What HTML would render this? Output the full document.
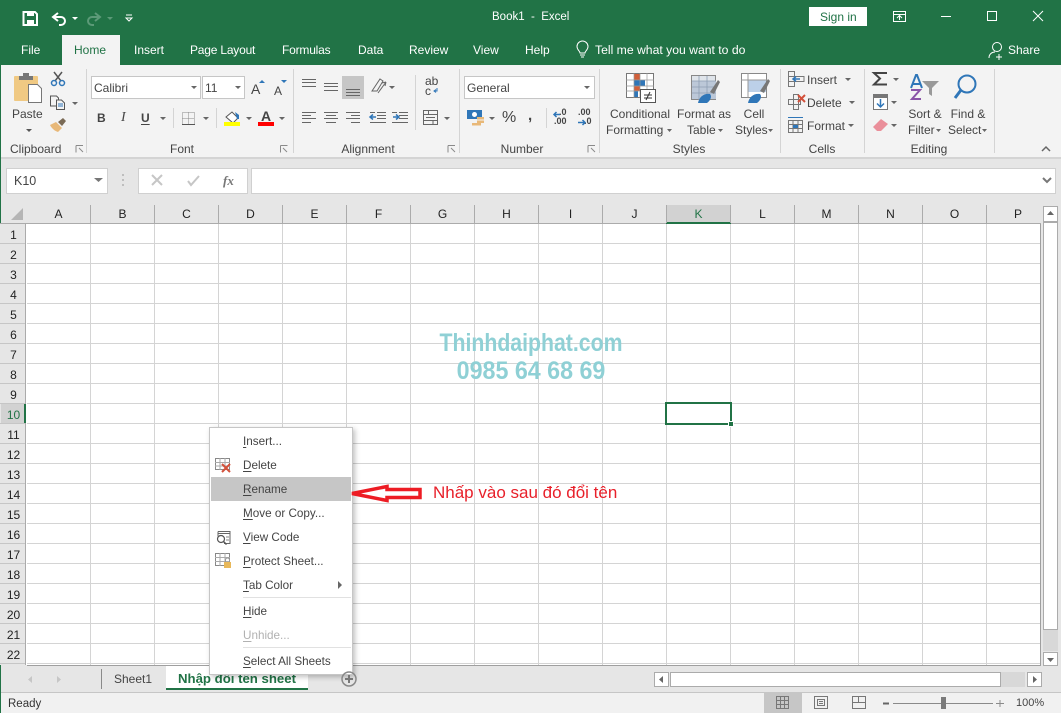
<!DOCTYPE html>
<html><head><meta charset="utf-8"><title>Book1 - Excel</title>
<style>
html,body{margin:0;padding:0}
body{width:1061px;height:713px;position:relative;overflow:hidden;background:#e6e6e6;font-family:"Liberation Sans",sans-serif;font-size:12px;color:#444}
div{box-sizing:border-box}
.a{position:absolute}
.t{position:absolute;white-space:nowrap;line-height:16px}
.w{color:#fff}
.c{transform:translateX(-50%)}
.u{text-decoration:underline;text-underline-offset:2px}
.ch{position:absolute;top:205px;height:18px;width:64px;text-align:center;line-height:18px;color:#222;border-right:1px solid #ababab}
.rh{position:absolute;left:1px;width:25px;height:20px;text-align:center;line-height:20px;color:#222}
.m{position:absolute;left:243px;white-space:nowrap;line-height:16px;color:#444;font-size:11.7px}
.m span{text-decoration:underline;text-underline-offset:2px}
</style></head><body>
<div class="a" style="left:0;top:0;width:1061px;height:65px;background:#217346"></div>
<div class="a" style="left:0;top:65px;width:1061px;height:94px;background:#f3f3f3;border-bottom:2px solid #d4d4d4"></div>
<div class="a" style="left:0;top:65px;width:1px;height:648px;background:#217346"></div>
<div class="a" style="left:62px;top:35px;width:58px;height:30px;background:#f3f3f3"></div>
<div class="t w" style="left:492px;top:9px;font-size:11.5px">Book1&nbsp; -&nbsp; Excel</div>
<div class="a" style="left:809px;top:7px;width:58px;height:19px;background:#fff"></div>
<div class="t" style="left:820px;top:9px;color:#217346">Sign in</div>
<div class="t w" style="left:21px;top:42px">File</div>
<div class="t" style="left:74px;top:42px;color:#217346">Home</div>
<div class="t w" style="left:134px;top:42px">Insert</div>
<div class="t w" style="left:190px;top:42px;letter-spacing:-.2px">Page Layout</div>
<div class="t w" style="left:282px;top:42px;letter-spacing:-.2px">Formulas</div>
<div class="t w" style="left:358px;top:42px">Data</div>
<div class="t w" style="left:409px;top:42px">Review</div>
<div class="t w" style="left:473px;top:42px">View</div>
<div class="t w" style="left:525px;top:42px">Help</div>
<div class="t w" style="left:595px;top:42px;font-size:12.2px">Tell me what you want to do</div>
<div class="t w" style="left:1008px;top:42px">Share</div>

<div class="t" style="left:12px;top:106px">Paste</div>
<div class="t" style="left:10px;top:141px">Clipboard</div>
<div class="t c" style="left:182px;top:141px">Font</div>
<div class="t c" style="left:368px;top:141px">Alignment</div>
<div class="t c" style="left:522px;top:141px">Number</div>
<div class="t c" style="left:689px;top:141px">Styles</div>
<div class="t c" style="left:822px;top:141px">Cells</div>
<div class="t c" style="left:929px;top:141px">Editing</div>

<div class="a" style="left:91px;top:76px;width:110px;height:23px;background:#fff;border:1px solid #c6c6c6"></div>
<div class="a" style="left:202px;top:76px;width:43px;height:23px;background:#fff;border:1px solid #c6c6c6"></div>
<div class="t" style="left:94px;top:80px">Calibri</div>
<div class="t" style="left:205px;top:80px">11</div>
<div class="a" style="left:464px;top:76px;width:131px;height:23px;background:#fff;border:1px solid #c6c6c6"></div>
<div class="t" style="left:467px;top:80px">General</div>
<div class="a" style="left:342px;top:76px;width:22px;height:23px;background:#c6c6c6"></div>
<div class="t" style="left:425px;top:76px;font-size:12px;line-height:10px;width:14px">ab<br>c</div>
<div class="t" style="left:502px;top:110px;font-size:16px">%</div>
<div class="t" style="left:528px;top:108px;font-size:15px;font-weight:bold">,</div>
<div class="t" style="left:559px;top:108px;font-size:9px;line-height:9px;font-weight:bold">.0<br></div>
<div class="t" style="left:554px;top:117px;font-size:9px;line-height:9px;font-weight:bold">.00</div>
<div class="t" style="left:578px;top:108px;font-size:9px;line-height:9px;font-weight:bold">.00</div>
<div class="t" style="left:584px;top:117px;font-size:9px;line-height:9px;font-weight:bold">.0</div>
<div class="t" style="left:97px;top:110px;font-weight:bold">B</div>
<div class="t" style="left:121px;top:110px;font-style:italic;font-family:'Liberation Serif',serif;font-size:14px">I</div>
<div class="t u" style="left:141px;top:110px;font-weight:bold">U</div>
<div class="t" style="left:251px;top:81px;font-size:14px">A</div>
<div class="t" style="left:274px;top:83px;font-size:12px">A</div>
<div class="t" style="left:261px;top:108px;font-size:14px;font-weight:bold">A</div>

<div class="t c" style="left:640px;top:106px">Conditional</div>
<div class="t" style="left:606px;top:122px">Formatting</div>
<div class="t c" style="left:704px;top:106px">Format as</div>
<div class="t" style="left:687px;top:122px">Table</div>
<div class="t c" style="left:754px;top:106px">Cell</div>
<div class="t" style="left:735px;top:122px">Styles</div>
<div class="t" style="left:807px;top:72px">Insert</div>
<div class="t" style="left:807px;top:95px">Delete</div>
<div class="t" style="left:807px;top:118px">Format</div>
<div class="t c" style="left:925px;top:106px">Sort &amp;</div>
<div class="t" style="left:908px;top:122px">Filter</div>
<div class="t c" style="left:968px;top:106px">Find &amp;</div>
<div class="t" style="left:948px;top:122px">Select</div>

<div class="a" style="left:6px;top:168px;width:102px;height:26px;background:#fff;border:1px solid #d0d0d0"></div>
<div class="t" style="left:14px;top:173px;font-size:12.5px">K10</div>
<div class="a" style="left:138px;top:168px;width:110px;height:26px;background:#fff;border:1px solid #d0d0d0"></div>
<div class="a" style="left:251px;top:168px;width:805px;height:26px;background:#fff;border:1px solid #d0d0d0"></div>
<div class="t" style="left:223px;top:173px;font-family:'Liberation Serif',serif;font-style:italic;font-weight:bold;color:#777;font-size:13px">fx</div>

<div class="a" style="left:27px;top:224px;width:1014px;height:442px;background-color:#fff;background-image:linear-gradient(to right,transparent 63px,#d4d4d4 63px),linear-gradient(to bottom,transparent 19px,#d4d4d4 19px);background-size:64px 100%,100% 20px;border-right:1px solid #9f9f9f;border-bottom:1px solid #9f9f9f"></div>
<div class="a" style="left:26px;top:224px;width:1px;height:441px;background:#fff"></div>
<div class="a" style="left:0;top:224px;width:26px;height:441px;border-right:1px solid #ababab;background:repeating-linear-gradient(to bottom,#e6e6e6 0,#e6e6e6 19px,#c6c6c6 19px,#c6c6c6 20px)"></div>
<div class="a" style="left:0;top:223px;width:1041px;height:1px;background:#ababab"></div>
<div class="a" style="left:666px;top:205px;width:65px;height:19px;background:#d2d2d2;border-bottom:2px solid #217346"></div>
<div class="a" style="left:1px;top:404px;width:25px;height:19px;background:#d2d2d2;border-right:2px solid #217346"></div>
<div class="ch" style="left:27px">A</div><div class="ch" style="left:91px">B</div><div class="ch" style="left:155px">C</div><div class="ch" style="left:219px">D</div><div class="ch" style="left:283px">E</div><div class="ch" style="left:347px">F</div><div class="ch" style="left:411px">G</div><div class="ch" style="left:475px">H</div><div class="ch" style="left:539px">I</div><div class="ch" style="left:603px">J</div><div class="ch" style="left:667px;color:#217346;border-right:1px solid #ababab">K</div><div class="ch" style="left:731px">L</div><div class="ch" style="left:795px">M</div><div class="ch" style="left:859px">N</div><div class="ch" style="left:923px">O</div><div class="ch" style="left:986px;border:0">P</div>
<div class="rh" style="top:225px">1</div><div class="rh" style="top:245px">2</div><div class="rh" style="top:265px">3</div><div class="rh" style="top:285px">4</div><div class="rh" style="top:305px">5</div><div class="rh" style="top:325px">6</div><div class="rh" style="top:345px">7</div><div class="rh" style="top:365px">8</div><div class="rh" style="top:385px">9</div><div class="rh" style="top:405px;color:#217346">10</div><div class="rh" style="top:425px">11</div><div class="rh" style="top:445px">12</div><div class="rh" style="top:465px">13</div><div class="rh" style="top:485px">14</div><div class="rh" style="top:505px">15</div><div class="rh" style="top:525px">16</div><div class="rh" style="top:545px">17</div><div class="rh" style="top:565px">18</div><div class="rh" style="top:585px">19</div><div class="rh" style="top:605px">20</div><div class="rh" style="top:625px">21</div><div class="rh" style="top:645px">22</div>

<div class="a" style="left:665px;top:402px;width:67px;height:23px;border:2px solid #217346"></div>
<div class="a" style="left:728px;top:421px;width:6px;height:6px;background:#217346;border:1px solid #fff"></div>

<div class="t c" style="left:530.500px;top:328px;font-size:25px;line-height:30px;font-weight:bold;color:#8fd0d5;transform:translateX(-50%) scaleX(.85)">Thinhdaiphat.com</div>
<div class="t c" style="left:530.500px;top:356px;font-size:25px;line-height:30px;font-weight:bold;color:#8fd0d5;transform:translateX(-50%) scaleX(.93)">0985 64 68 69</div>

<div class="a" style="left:1043px;top:206px;width:15px;height:16px;background:#fff;border:1px solid #ababab"></div>
<div class="a" style="left:1043px;top:222px;width:15px;height:408px;background:#fff;border:1px solid #ababab"></div>
<div class="a" style="left:1043px;top:630px;width:15px;height:21px;background:#d8d8d8"></div>
<div class="a" style="left:1043px;top:652px;width:15px;height:14px;background:#fff;border:1px solid #ababab"></div>

<div class="a" style="left:1px;top:692px;width:1060px;height:21px;background:#f1f1f1;border-top:1px solid #c6c6c6"></div>
<div class="a" style="left:101px;top:669px;width:1px;height:20px;background:#8a8a8a"></div>
<div class="t" style="left:114px;top:671px">Sheet1</div>
<div class="a" style="left:166px;top:666px;width:142px;height:24px;background:#fff;border-bottom:2px solid #217346"></div>
<div class="t" style="left:178px;top:671px;color:#217346;font-weight:bold;font-size:13.2px">Nhập đổi tên sheet</div>
<div class="a" style="left:654px;top:672px;width:15px;height:15px;background:#fff;border:1px solid #ababab"></div>
<div class="a" style="left:670px;top:672px;width:331px;height:15px;background:#fff;border:1px solid #ababab"></div>
<div class="a" style="left:1001px;top:672px;width:24px;height:15px;background:#d8d8d8"></div>
<div class="a" style="left:1027px;top:672px;width:15px;height:15px;background:#fff;border:1px solid #ababab"></div>
<div class="t" style="left:8px;top:696px;color:#333;font-size:11.5px">Ready</div>
<div class="a" style="left:764px;top:693px;width:38px;height:20px;background:#c6c6c6"></div>
<div class="t" style="left:1016px;top:695px;color:#444;font-size:11px">100%</div>

<div class="a" style="left:209px;top:427px;width:144px;height:248px;background:#fff;border:1px solid #c6c6c6;box-shadow:2px 2px 5px rgba(0,0,0,.25)"></div>
<div class="a" style="left:211px;top:477px;width:140px;height:24px;background:#c6c6c6"></div>
<div class="a" style="left:243px;top:597px;width:108px;height:1px;background:#e1e1e1"></div>
<div class="a" style="left:243px;top:647px;width:108px;height:1px;background:#e1e1e1"></div>
<div class="m" style="top:434px"><span>I</span>nsert...</div>
<div class="m" style="top:458px"><span>D</span>elete</div>
<div class="m" style="top:482px"><span>R</span>ename</div>
<div class="m" style="top:506px"><span>M</span>ove or Copy...</div>
<div class="m" style="top:530px"><span>V</span>iew Code</div>
<div class="m" style="top:554px"><span>P</span>rotect Sheet...</div>
<div class="m" style="top:578px"><span>T</span>ab Color</div>
<div class="m" style="top:604px"><span>H</span>ide</div>
<div class="m" style="top:628px;color:#b1b1b1"><span>U</span>nhide...</div>
<div class="m" style="top:654px"><span>S</span>elect All Sheets</div>
<div class="t" style="left:433px;top:484px;font-size:17px;line-height:18px;color:#e8202a">Nhấp vào sau đó đổi tên</div>

<svg class="a" style="left:0;top:0" width="1061" height="713" viewBox="0 0 1061 713" fill="none">
<!-- QAT -->
<path d="M24 12h11l2 2v11H23.500V12z" stroke="#fff" stroke-width="2"/><rect x="27" y="12" width="7" height="4" fill="#fff"/><rect x="27" y="20" width="7" height="5" fill="#fff"/>
<path d="M58 13l-5 4 5 4M53 17h8a4 4 0 0 1 0 8h-2" stroke="#fff" stroke-width="2"/><path d="M72 17h6l-3 3z" fill="#fff"/>
<path d="M95 13l5 4-5 4M100 17h-8a4 4 0 0 0 0 8h2" stroke="#5c9a78" stroke-width="2"/><path d="M107 17h6l-3 3z" fill="#5c9a78"/>
<path d="M126 15h6M126 18h6l-3 3z" stroke="#fff"/>
<!-- window -->
<path d="M893.500 11.500h12v10h-12zM893.500 14.500h12M899.500 20v-4M897 18l2.500-2.500 2.500 2.500" stroke="#fff"/>
<path d="M941 16.500h10" stroke="#fff"/><rect x="987.500" y="11.500" width="9" height="9" stroke="#fff"/><path d="M1033 11l10 10M1043 11l-10 10" stroke="#fff"/>
<circle cx="997" cy="47" r="4.500" stroke="#fff"/><path d="M989 58c0-4 3-6 6-6M999 54v6M996 57h6" stroke="#fff"/>
<path d="M580 55h5M580 53c0-2-3-3-3-6.500a5.500 5.500 0 0 1 11 0c0 3.500-3 4.500-3 6.500zM581 57h3" stroke="#fff"/>
<!-- separators -->
<path d="M86.500 69v84M293.500 69v84M459.500 69v84M599.500 69v84M780.500 69v84M864.500 69v84M994.500 69v84" stroke="#d4d4d4"/>
<path d="M173.500 108v20M216.500 108v20M415.500 75v55M546.500 108v20" stroke="#d4d4d4"/>
<!-- launchers -->
<g stroke="#8a8a8a"><path d="M76 145.500h7M76 145.500v7M79 148l4 4M280.500 145.500h7M280.500 145.500v7M283 148l4 4"/><path d="M448 145.500h7M448 145.500v7M451 148l4 4M588 145.500h7M588 145.500v7M591 148l4 4"/></g>
<!-- clipboard -->
<rect x="14" y="76" width="24" height="25" rx="1" fill="#f0c983"/><rect x="19" y="76" width="14" height="4" fill="#777"/><rect x="23" y="73" width="6" height="4" fill="#777"/>
<path d="M28.500 84.500h9l4 4v14h-13z" fill="#fff" stroke="#777"/>
<path d="M26 129h6l-3 3z" fill="#555"/>
<!-- cut copy painter -->
<path d="M54 72l7 9M62 72l-7 9" stroke="#555" stroke-width="1.500"/><circle cx="54" cy="83" r="2.500" stroke="#2f76b8" stroke-width="1.500"/><circle cx="62" cy="83" r="2.500" stroke="#2f76b8" stroke-width="1.500"/>
<path d="M50.500 96h6l2 2v8h-8z" fill="#f3f3f3" stroke="#555"/><path d="M56.500 100h5l3 3v6.500h-8z" fill="#f3f3f3" stroke="#555"/><path d="M58 104h5M58 106h5" stroke="#2f76b8"/><path d="M72 102h6l-3 3z" fill="#666"/>
<path d="M50 125l6-3 6 6-4 4c-3-1-6-3-8-7z" fill="#e8b878"/><path d="M58 122l5-4 3 3-4 5z" fill="#7a6a55"/>
<!-- font dropdowns -->
<path d="M191 86h6l-3 3zM235 86h6l-3 3zM584 86h6l-3 3zM160 117h6l-3 3zM203 117h6l-3 3zM246 117h6l-3 3zM279 117h6l-3 3zM489 117h6l-3 3zM444 117h6l-3 3zM389 86h6l-3 3z" fill="#666"/>
<path d="M259 83l3-3 3 3z" fill="#2f76b8"/><path d="M281 80h6l-3 3z" fill="#2f76b8"/>
<!-- border -->
<path d="M182.500 112.500h12v12h-12zM182.500 118.500h12M188.500 112.500v12" stroke="#888" stroke-dasharray="1 1"/><path d="M182 124.500h13" stroke="#555"/>
<!-- fill -->
<path d="M226 117l6-5 6 6-5 5z" stroke="#555" fill="#fff"/><path d="M235 112l4 3v4h-2z" fill="#2f76b8"/><rect x="224" y="122" width="16" height="4" fill="#ffff00"/>
<rect x="258" y="122" width="16" height="4" fill="#ff0000"/>
<!-- align -->
<g stroke="#666"><path d="M302 79.500h14M302 82.500h14M302 86.500h14M324 83.500h14M324 86.500h14M324 90.500h14M346 89.500h14M346 92.500h14M346 95.500h14"/>
<path d="M302 112.500h14M302 115.500h9M302 118.500h14M302 122.500h9M324 112.500h14M326 115.500h10M324 118.500h14M326 122.500h10M346 112.500h14M351 115.500h9M346 118.500h14M351 122.500h9"/>
<path d="M377 112.500h9M377 115.500h9M377 118.500h9M370 122.500h16M370 112.500h5M392 122.500h16M392 112.500h5M399 112.500h9M399 115.500h9M399 118.500h9"/></g>
<path d="M376 117h-5M373 114.500l-3 2.500 3 2.500M393 117h5M396 114.500l3 2.500-3 2.500" stroke="#2f76b8" stroke-width="1.500"/>
<path d="M372 91l8-12 3 2-6 10zM378 93l8-11M386 82l-4 1M386 82l-1 4" stroke="#666"/>
<path d="M437 88v3h-3M436 89.500l-2 1.500 2 1.500" stroke="#2f76b8"/>
<rect x="423.500" y="110.500" width="14" height="14" stroke="#666"/><path d="M423 114.500h15M423 120.500h15M428.500 110v4M433 120v4M426 117.500h9" stroke="#666"/>
<!-- number -->
<rect x="467" y="110" width="15" height="9" fill="#2f76b8"/><circle cx="474.500" cy="114.500" r="2.500" fill="#fff"/><rect x="477" y="117" width="7" height="2.500" fill="#e8b878"/><rect x="477" y="120.500" width="7" height="2.500" fill="#e8b878"/><rect x="472" y="123" width="9" height="2.500" fill="#e8b878"/>
<path d="M554 114.500h6M556.500 112l-2.500 2.500 2.500 2.500M578 122.500h7M582.500 120l2.500 2.500-2.500 2.500" stroke="#2f76b8" stroke-width="1.500"/>
<!-- styles -->
<rect x="626.500" y="73.500" width="27" height="24" fill="#fff" stroke="#777"/><rect x="634" y="74" width="6" height="6" fill="#d2603a"/><rect x="634" y="80" width="11" height="6" fill="#2f76b8"/><rect x="634" y="86" width="6" height="5" fill="#d2603a"/><rect x="634" y="91" width="4" height="6" fill="#2f76b8"/>
<path d="M626 80h28M626 86h28M626 91h28M634 73v25M640 73v25M647 73v25" stroke="#999" stroke-width=".7"/>
<rect x="640.500" y="89.500" width="15" height="13" fill="#fff" stroke="#555"/><path d="M644 95h8M644 98h8M650 92l-4 8" stroke="#333"/>
<rect x="691.500" y="75.500" width="24" height="24" fill="#dfe4ea" stroke="#888"/><rect x="692" y="81" width="24" height="18" fill="#bcc8d8"/><path d="M692 81h24M692 87h24M692 93h24M699 76v24M707 76v24" stroke="#8e9fb3" stroke-width=".8"/>
<path d="M710 92l8-12 2 2-6 12z" fill="#777"/><path d="M698 103c1-6 6-10 12-9 2 2 1 6-3 9z" fill="#2f76b8"/>
<rect x="741.500" y="73.500" width="25" height="24" fill="#fff" stroke="#888"/><rect x="748" y="80" width="18" height="12" fill="#bcd0e8"/><path d="M741 80h26M748 73v25" stroke="#999"/>
<path d="M760 91l8-12 2 2-6 12z" fill="#777"/><path d="M748 103c1-6 6-10 12-9 2 2 1 6-3 9z" fill="#2f76b8"/>
<path d="M667 129h5l-2.500 3zM718 129h5l-2.500 3zM768 129h5l-2.500 3zM845 78h6l-3 3zM849 101h6l-3 3zM848 124h6l-3 3zM893 78h6l-3 3zM891 101h6l-3 3zM891 124h6l-3 3zM936 129h5l-2.500 3zM982 129h5l-2.500 3z" fill="#666"/>
<!-- cells -->
<path d="M788.500 71.500h6v15h-6zM788.500 76.500h6M788.500 81.500h6M795 76.500h9v5h-9z" stroke="#777"/><path d="M800 79h-7M796 76.500l-3 2.500 3 2.500" stroke="#2f76b8" stroke-width="1.500"/>
<path d="M788.500 99.500h12v5h-12zM793.500 94.500h5v15h-5z" stroke="#777"/><path d="M798 95l7 7M805 95l-7 7" stroke="#d2503a" stroke-width="2"/>
<rect x="788.500" y="120.500" width="14" height="12" stroke="#777"/><path d="M788 124.500h15M788 128.500h15M793 120v12M798 120v12" stroke="#777"/><rect x="793" y="125" width="5" height="3" fill="#2f76b8"/><path d="M788 117.500h15" stroke="#2f76b8"/>
<!-- editing -->
<path d="M887 73h-13l6 5.500-6 6h13" stroke="#444" stroke-width="2"/>
<rect x="873.500" y="94.500" width="14" height="15" fill="#fff" stroke="#777"/><path d="M874 95h13v3h-13z" fill="#777"/><path d="M880.500 99v8M877 103.500l3.500 3.500 3.500-3.500" stroke="#2f76b8" stroke-width="1.500"/>
<path d="M873 127l8-8 7 5-7 7h-4z" fill="#ea8f9a"/>
<path d="M911 88l5-13h1l5 13M913 84h7" stroke="#2f76b8" stroke-width="2"/><path d="M911 90h9l-8 9h9" stroke="#8a54a8" stroke-width="2"/>
<path d="M922 81h17l-7 7v8l-3-2v-6z" fill="#999"/>
<circle cx="967" cy="84" r="8.500" stroke="#2f76b8" stroke-width="2"/><path d="M961 90l-6 8" stroke="#2f76b8" stroke-width="3"/>
<path d="M1042 151l4-4 4 4" stroke="#666" stroke-width="1.500"/>
<!-- formula bar -->
<path d="M94 178h9l-4.500 4z" fill="#777"/>
<path d="M123 174v2M123 179v2M123 184v2" stroke="#b0b0b0" stroke-width="1.500"/>
<path d="M152 175l10 10M162 175l-10 10" stroke="#c6c6c6" stroke-width="2"/><path d="M188 181l3 4 8-9" stroke="#c6c6c6" stroke-width="2"/>
<path d="M1043 178l4 4 4-4" stroke="#777" stroke-width="2"/>
<path d="M11 220h12v-12z" fill="#b5b5b5"/>
<!-- scrollbars -->
<path d="M1047 215h7l-3.500-4zM1047 658h7l-3.500 4z" fill="#666"/><path d="M663 676l-4 3.500 4 3.500zM1033 676l4 3.500-4 3.500z" fill="#666"/>
<path d="M32 676l-4 3.500 4 3.500zM57 676l4 3.500-4 3.500z" fill="#c6c6c6"/>
<circle cx="349" cy="679" r="7" stroke="#888" stroke-width="1.500"/><path d="M345 679h8M349 675v8" stroke="#777" stroke-width="2"/>
<!-- status -->
<path d="M776.500 696.500h12v12h-12zM776.500 700.500h12M776.500 704.500h12M780.500 696.500v12M784.500 696.500v12" stroke="#777"/>
<path d="M814.500 696.500h13v12h-13zM817.500 699.500h7v6h-7zM819 701.500h4M819 703.500h4" stroke="#777"/>
<path d="M852.500 696.500h13v12h-13zM858.500 696.500v6h-6M858.500 702.500h7" stroke="#777"/>
<path d="M883 703.500h6M893 703.500h100M996 703.500h8M1000 700v7" stroke="#8a8a8a"/><path d="M883 703.500h6" stroke="#666" stroke-width="2"/><rect x="941" y="697" width="5" height="12" fill="#7a7a7a"/>
<!-- context menu icons -->
<rect x="215.500" y="458.500" width="14" height="11" stroke="#888"/><path d="M215 462.500h15M215 466h15M220 458v12M225 458v12" stroke="#aaa"/><path d="M222 464l8 8M230 464l-8 8" stroke="#d2503a" stroke-width="2"/>
<path d="M218 531.500h12v12h-6M218 531.500v5M218 533.500h12" stroke="#666"/><circle cx="221" cy="539" r="3.500" stroke="#555" stroke-width="1.200"/><path d="M223.500 541.500l3 3" stroke="#555" stroke-width="1.500"/><path d="M226 537h3M226 540h3" stroke="#888"/>
<rect x="215.500" y="553.500" width="14" height="12" stroke="#888"/><path d="M215 557.500h15M215 561.500h15M220 553v13M225 553v13" stroke="#aaa"/><rect x="224" y="562" width="7" height="6" fill="#e8b85a"/><path d="M225.500 562v-2a2 2 0 0 1 4 0v2" stroke="#999"/>
<path d="M338 581l4 4-4 4z" fill="#666"/>
<!-- arrow -->
<path d="M352 493.500l35-7v3l33 0v8h-33v3z" fill="#fff" stroke="#ed1c24" stroke-width="3.500"/>
</svg>
</body></html>
